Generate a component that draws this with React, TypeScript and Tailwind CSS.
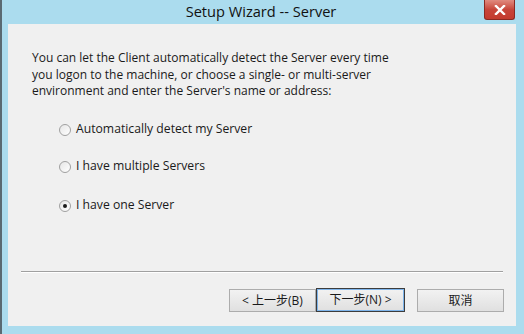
export default function App() {
  const font = { fontFamily: '"Open Sans", "Noto Sans CJK SC", sans-serif' };
  const Radio = ({ checked, label }: { checked?: boolean; label: string }) => (
    <div className="flex items-center h-[16px]">
      <div className="w-[12px] h-[12px] rounded-full border border-[#a0a0a0] bg-gradient-to-br from-[#e6e6e6] to-white flex items-center justify-center">
        {checked && <div className="w-[4px] h-[4px] rounded-full bg-[#1a1a1a]" />}
      </div>
      <span className="ml-[5px] text-[12.2px] text-[#1a1a1a]">{label}</span>
    </div>
  );
  return (
    <div className="w-[524px] h-[334px] bg-[#abdcee] flex flex-col border-l-2 border-[#5a6a72] overflow-hidden" style={font}>
      <div className="h-[24px] flex items-start relative shrink-0">
        <div className="flex-1 text-center text-[14.6px] leading-[22px] text-[#111] pr-[4px]" style={{ fontFamily: '"Open Sans", sans-serif' }}>
          Setup Wizard -- Server
        </div>
        <div className="absolute right-[9px] top-0 w-[31px] h-[20px] rounded-b-[3px] bg-gradient-to-b from-[#e08a7f] via-[#c7453a] to-[#c43b2e] border border-[#8a2a22] border-t-0 flex items-center justify-center">
          <svg width="12" height="10" viewBox="0 0 12 10">
            <path d="M2 1 L10 9 M10 1 L2 9" stroke="white" strokeWidth="2.4" strokeLinecap="square" />
          </svg>
        </div>
      </div>
      <div className="flex-1 ml-[6px] mr-[8px] mb-[8px] bg-[#f0f0f0] flex flex-col">
        <div className="pl-[24px] pt-[26px] text-[12px] leading-[16.5px] text-[#1a1a1a]">
          <div>You can let the Client automatically detect the Server every time</div>
          <div>you logon to the machine, or choose a single- or multi-server</div>
          <div>environment and enter the Server's name or address:</div>
        </div>
        <div className="pl-[51px] mt-[22px] flex flex-col gap-[21px]">
          <Radio label="Automatically detect my Server" />
          <Radio label="I have multiple Servers" />
          <div className="mt-[2px]">
            <Radio checked label="I have one Server" />
          </div>
        </div>
        <div className="mt-[57px] mx-[13px] h-[2px] border-t border-[#a0a0a0] border-b border-b-white" />
        <div className="mt-[16px] flex items-start pl-[221px]">
          <button className="w-[87px] h-[23px] border border-[#acacac] bg-gradient-to-b from-[#f2f2f2] to-[#e0e0e0] text-[12px] text-[#1a1a1a] leading-[21px]">
            &lt; 上一步(B)
          </button>
          <button className="w-[89px] h-[24px] -mt-[1px] border border-[#3c3c3c] bg-gradient-to-b from-[#f2f2f2] to-[#e0e0e0] text-[12px] text-[#1a1a1a] leading-[22px] outline outline-1 -outline-offset-2 outline-[#7eb4ea]">
            下一步(N) &gt;
          </button>
          <button className="ml-[12px] w-[87px] h-[23px] border border-[#acacac] bg-gradient-to-b from-[#f2f2f2] to-[#e0e0e0] text-[12px] text-[#1a1a1a] leading-[21px]">
            取消
          </button>
        </div>
      </div>
    </div>
  );
}
